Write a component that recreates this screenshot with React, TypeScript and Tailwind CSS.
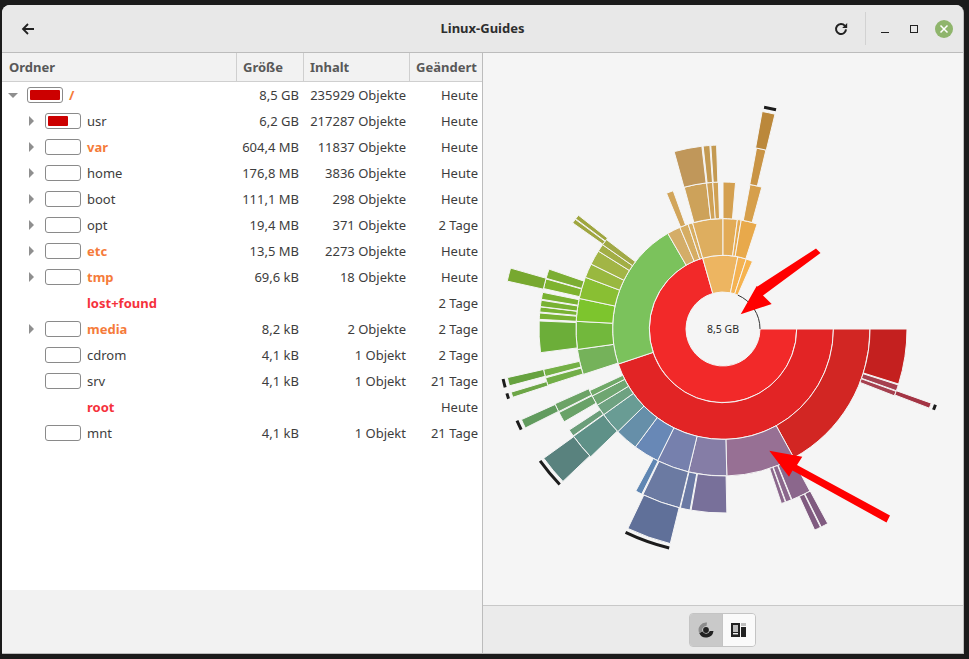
import React from "react";

const CX = 723;
const CY = 329;
const R = [37, 73.7, 110.4, 147, 184, 221];

function pt(r: number, a: number) {
  const t = (a * Math.PI) / 180;
  return `${(CX + r * Math.cos(t)).toFixed(2)} ${(CY + r * Math.sin(t)).toFixed(2)}`;
}

function wedge(d: number, a: number, b: number) {
  const r0 = R[d - 1];
  const r1 = R[d];
  const large = b - a > 180 ? 1 : 0;
  return `M${pt(r0, a)} A${r0} ${r0} 0 ${large} 1 ${pt(r0, b)} L${pt(r1, b)} A${r1} ${r1} 0 ${large} 0 ${pt(r1, a)} Z`;
}

const segs: [number, number, number, string][] = [
  // ring 1
  [1, 0, 254, "#f22929"],
  [1, 254, 281.6, "#edb561"],
  [1, 281.6, 288.4, "#f4b252"],
  [1, 288.4, 293.6, "#f6b34f"],
  // ring 2
  [2, 0, 161.5, "#e22425"],
  [2, 161.5, 240, "#7bc25c"],
  [2, 240, 247, "#d4ad68"],
  [2, 247, 251.6, "#d6ad62"],
  [2, 251.6, 254, "#d8ad60"],
  [2, 254, 270, "#deae5f"],
  [2, 270, 277.5, "#e2ab56"],
  [2, 277.5, 279.5, "#e6aa50"],
  [2, 279.5, 288, "#e8a94b"],
  // ring 3
  [3, 0, 61.2, "#d22623"],
  [3, 61.2, 88.5, "#977094"],
  [3, 88.5, 103.6, "#857da6"],
  [3, 103.6, 116.4, "#7680ad"],
  [3, 116.4, 126.6, "#6888b6"],
  [3, 126.6, 135.7, "#668fa9"],
  [3, 135.7, 144.3, "#699c94"],
  [3, 144.3, 148.8, "#6ea281"],
  [3, 148.8, 152.9, "#6fa671"],
  [3, 152.9, 155.2, "#70a968"],
  [3, 162, 172, "#75b25a"],
  [3, 172, 183, "#72b83c"],
  [3, 183, 192, "#7dc52d"],
  [3, 192, 200.6, "#89bf33"],
  [3, 200.6, 206.2, "#99b83f"],
  [3, 206.2, 212, "#a2b545"],
  [3, 212, 215, "#a2ae45"],
  [3, 215, 217.5, "#a1a946"],
  [3, 247.4, 250.2, "#d2a55a"],
  [3, 254.7, 263.6, "#cda25a"],
  [3, 263.6, 266, "#cfa156"],
  [3, 266, 268.2, "#d0a154"],
  [3, 270, 274.9, "#d4a050"],
  [3, 280.6, 285.3, "#d69f4b"],
  // ring 4
  [4, 0, 17.4, "#c4201f"],
  [4, 17.7, 19.6, "#a6404f"],
  [4, 19.8, 21.3, "#a6404f"],
  [4, 61.8, 68, "#8b678c"],
  [4, 68.2, 70, "#8b678c"],
  [4, 70.2, 71.5, "#8b678c"],
  [4, 88.8, 100, "#78709a"],
  [4, 100.3, 103.4, "#6a79a4"],
  [4, 103.6, 115.8, "#6b7aa2"],
  [4, 116.2, 118.3, "#5f86b3"],
  [4, 136, 144.3, "#5f9188"],
  [4, 144.5, 146.7, "#6b9e7a"],
  [4, 149.7, 153, "#69a268"],
  [4, 153.3, 156, "#6ca366"],
  [4, 162.2, 164.6, "#72ae48"],
  [4, 165, 167.3, "#74b046"],
  [4, 172.6, 182.5, "#6cae39"],
  [4, 183, 185, "#78b232"],
  [4, 185.3, 186.9, "#78b232"],
  [4, 187, 189, "#78b232"],
  [4, 189.3, 191.5, "#79b231"],
  [4, 192.7, 195.8, "#7eb32f"],
  [4, 196, 199, "#7cae33"],
  [4, 215.2, 216.6, "#9fa63f"],
  [4, 216.8, 218.2, "#9fa63f"],
  [4, 254.6, 263.4, "#c0975a"],
  [4, 263.8, 265.9, "#c49a52"],
  [4, 266.2, 268, "#c49a52"],
  [4, 280.5, 283.5, "#c99445"],
  // ring 5
  [5, 19.6, 21, "#a33444"],
  [5, 61.7, 63.6, "#805b80"],
  [5, 63.8, 65.5, "#805b80"],
  [5, 103.8, 115.5, "#607099"],
  [5, 136.4, 144.2, "#59827e"],
  [5, 153.4, 155.8, "#619b5e"],
  [5, 162, 163.4, "#6da647"],
  [5, 165.1, 167.3, "#66a23f"],
  [5, 192.5, 196, "#77a82f"],
  [5, 280.2, 283.6, "#bb883b"],
];

const ticks: [number, number][] = [
  [19.6, 21],
  [103.8, 115.6],
  [136.4, 144.2],
  [153.5, 156],
  [162, 163.4],
  [165, 167.2],
  [280.5, 283.6],
];

function tickPath(a: number, b: number) {
  return `M${pt(225.5, a)} A225.5 225.5 0 0 1 ${pt(225.5, b)}`;
}

type Row = {
  name: string;
  tone?: "orange" | "red";
  size?: string;
  items?: string;
  date: string;
  bar?: number;
  root?: boolean;
  arrow?: boolean;
  nobar?: boolean;
};

const rows: Row[] = [
  { name: "/", tone: "orange", size: "8,5 GB", items: "235929 Objekte", date: "Heute", bar: 30, root: true },
  { name: "usr", size: "6,2 GB", items: "217287 Objekte", date: "Heute", bar: 20, arrow: true },
  { name: "var", tone: "orange", size: "604,4 MB", items: "11837 Objekte", date: "Heute", arrow: true },
  { name: "home", size: "176,8 MB", items: "3836 Objekte", date: "Heute", arrow: true },
  { name: "boot", size: "111,1 MB", items: "298 Objekte", date: "Heute", arrow: true },
  { name: "opt", size: "19,4 MB", items: "371 Objekte", date: "2 Tage", arrow: true },
  { name: "etc", tone: "orange", size: "13,5 MB", items: "2273 Objekte", date: "Heute", arrow: true },
  { name: "tmp", tone: "orange", size: "69,6 kB", items: "18 Objekte", date: "Heute", arrow: true },
  { name: "lost+found", tone: "red", date: "2 Tage", nobar: true },
  { name: "media", tone: "orange", size: "8,2 kB", items: "2 Objekte", date: "2 Tage", arrow: true },
  { name: "cdrom", size: "4,1 kB", items: "1 Objekt", date: "2 Tage" },
  { name: "srv", size: "4,1 kB", items: "1 Objekt", date: "21 Tage" },
  { name: "root", tone: "red", date: "Heute", nobar: true },
  { name: "mnt", size: "4,1 kB", items: "1 Objekt", date: "21 Tage" },
];

function TreeRow({ r }: { r: Row }) {
  const nameClass =
    r.tone === "orange"
      ? "font-bold text-[#f57b3a]"
      : r.tone === "red"
      ? "font-bold text-[#f5323c]"
      : "";
  return (
    <div className="grid h-[26px] grid-cols-[235px_67px_106px_72px] items-center text-[#3d3d3d]">
      <div className={`flex items-center ${r.root ? "pl-[6px]" : "pl-[25px]"}`}>
        <div className="flex w-[13px] justify-start">
          {r.root ? (
            <div className="h-0 w-0 border-x-[5px] border-t-[5px] border-x-transparent border-t-[#8f8f8f]" />
          ) : r.arrow ? (
            <div className="ml-[2px] h-0 w-0 border-y-[5px] border-l-[5px] border-y-transparent border-l-[#8f8f8f]" />
          ) : null}
        </div>
        <div className={r.root ? "ml-[6px] w-[36px]" : "ml-[5px] w-[36px]"}>
          {r.nobar ? null : (
            <div className="flex h-[16px] w-[36px] items-center rounded-[3px] border border-[#8a8a8a] bg-white px-[2px]">
              {r.bar ? <div className="h-[10px] rounded-[1px] bg-[#cc0000]" style={{ width: r.bar }} /> : null}
            </div>
          )}
        </div>
        <span className={`ml-[6px] pt-[2px] ${nameClass}`}>{r.name}</span>
      </div>
      <div className="whitespace-nowrap pr-[5px] pt-[2px] text-right">{r.size}</div>
      <div className="whitespace-nowrap pr-[4px] pt-[2px] text-right">{r.items}</div>
      <div className="whitespace-nowrap pr-[4px] pt-[2px] text-right">{r.date}</div>
    </div>
  );
}

export default function App() {
  return (
    <div className="h-[659px] w-[969px] overflow-hidden bg-[#1b1b1b] pl-[2px] pr-[5px] pt-[5px] pb-[5px] font-['Noto_Sans',sans-serif] text-[13px]">
      <div className="flex h-[649px] flex-col overflow-hidden rounded-t-[8px] border-b border-r border-[#bdbdbd] bg-[#f5f5f5]">
        <header className="grid h-[48px] shrink-0 grid-cols-[1fr_auto_1fr] items-center border-b border-[#bcbcbc] bg-[#e8e8e8]">
          <div className="pl-[19px]">
            <svg width="14" height="14" viewBox="0 0 14 14" fill="none" stroke="#222" strokeWidth="1.8">
              <path d="M13 7H2M7 2 2 7l5 5" />
            </svg>
          </div>
          <div className="font-bold text-[#2e2e2e]">Linux-Guides</div>
          <div className="flex items-center justify-end">
            <svg width="14" height="14" viewBox="0 0 14 14" fill="none" stroke="#222" strokeWidth="2">
              <path d="M10.9 3.9A5 5 0 1 0 12 7.4" />
              <path d="M13.2 1v5H8.2z" fill="#222" stroke="none" />
            </svg>
            <div className="ml-[17px] h-[33px] w-px bg-[#d2d2d2]" />
            <div className="ml-[15px] mt-[8px] h-[1px] w-[8px] bg-[#222]" />
            <div className="ml-[21px] h-[8px] w-[8px] border border-[#222]" />
            <div className="ml-[17px] mr-[10px] flex h-[18px] w-[18px] items-center justify-center rounded-full bg-[#8fb56c]">
              <svg width="10" height="10" viewBox="0 0 10 10" stroke="#fff" strokeWidth="1.5">
                <path d="M1.5 1.5l7 7M8.5 1.5l-7 7" />
              </svg>
            </div>
          </div>
        </header>
        <main className="flex min-h-0 flex-1">
          <section className="flex w-[481px] shrink-0 flex-col border-r border-[#bcbcbc] bg-[#f2f2f2]">
            <div className="grid h-[29px] shrink-0 grid-cols-[235px_67px_106px_72px] items-center border-b border-[#cfcfcf] bg-[#f2f2f2] font-bold text-[#585858]">
              <div className="flex h-full items-center border-r border-[#cfcfcf] pl-[7px] pt-[2px]">Ordner</div>
              <div className="flex h-full items-center border-r border-[#cfcfcf] pl-[6px] pt-[2px]">Größe</div>
              <div className="flex h-full items-center border-r border-[#cfcfcf] pl-[6px] pt-[2px]">Inhalt</div>
              <div className="flex h-full items-center pl-[6px] pt-[2px]">Geändert</div>
            </div>
            <div className="h-[508px] shrink-0 bg-white">
              {rows.map((r) => (
                <TreeRow key={r.name} r={r} />
              ))}
            </div>
          </section>
          <section className="flex min-w-0 flex-1 flex-col">
            <div className="min-h-0 flex-1">
              <svg className="block h-full w-full" viewBox="483 53 480 552">
                {segs.map(([d, a, b, c], i) => (
                  <path key={i} d={wedge(d, a, b)} fill={c} stroke="#f5f5f5" strokeWidth="1" />
                ))}
                <path d={`M${pt(37, 293.6)} A37 37 0 0 1 ${pt(37, 360)}`} fill="none" stroke="#333" strokeWidth="1" />
                {ticks.map(([a, b], i) => (
                  <path key={i} d={tickPath(a, b)} fill="none" stroke="#1c1c1c" strokeWidth="3" />
                ))}
                <text x={CX} y={333} textAnchor="middle" fontSize="10.5" fill="#2a2a2a">
                  8,5 GB
                </text>
                <polygon
                  fill="#ff0000"
                  points="740.7,314.3 771.7,304 763,295.5 820.5,253 816,248.5 757.5,286.5 756.7,286"
                />
                <polygon
                  fill="#ff0000"
                  points="769.3,450.7 802.3,456.7 797,465 890,515.5 886.5,522.5 792.5,470.5 789,476.7"
                />
              </svg>
            </div>
            <div className="flex h-[48px] shrink-0 items-center justify-center border-t border-[#c8c8c8] bg-[#ebebeb] pr-[2px]">
              <div className="flex h-[34px] w-[67px] overflow-hidden rounded-[4px] border border-[#c4c4c4]">
                <div className="flex w-[33px] items-center justify-center border-r border-[#c4c4c4] bg-[#c9c9c9]">
                  <svg width="16" height="16" viewBox="0 0 16 16">
                    <path d="M15.5 9A7.5 7.5 0 0 1 1.2 11 L4.5 9.5A4 4 0 0 0 11.8 9Z" fill="#222" />
                    <path d="M1.2 11A7.5 7.5 0 0 1 9 .6L8.5 4A4 4 0 0 0 4.5 9.5Z" fill="#8c8c8c" />
                    <circle cx="8" cy="8" r="2.9" fill="#222" />
                  </svg>
                </div>
                <div className="flex flex-1 items-center justify-center bg-[#fafafa]">
                  <svg width="15" height="14" viewBox="0 0 15 14">
                    <rect x="0" y="0" width="9" height="14" fill="#222" />
                    <rect x="2" y="2" width="5" height="7" fill="#bdbdbd" />
                    <rect x="2" y="10" width="5" height="1.4" fill="#eee" />
                    <rect x="10" y="0" width="5" height="3" fill="#bdbdbd" />
                    <rect x="10" y="4" width="5" height="10" fill="#222" />
                  </svg>
                </div>
              </div>
            </div>
          </section>
        </main>
      </div>
    </div>
  );
}
